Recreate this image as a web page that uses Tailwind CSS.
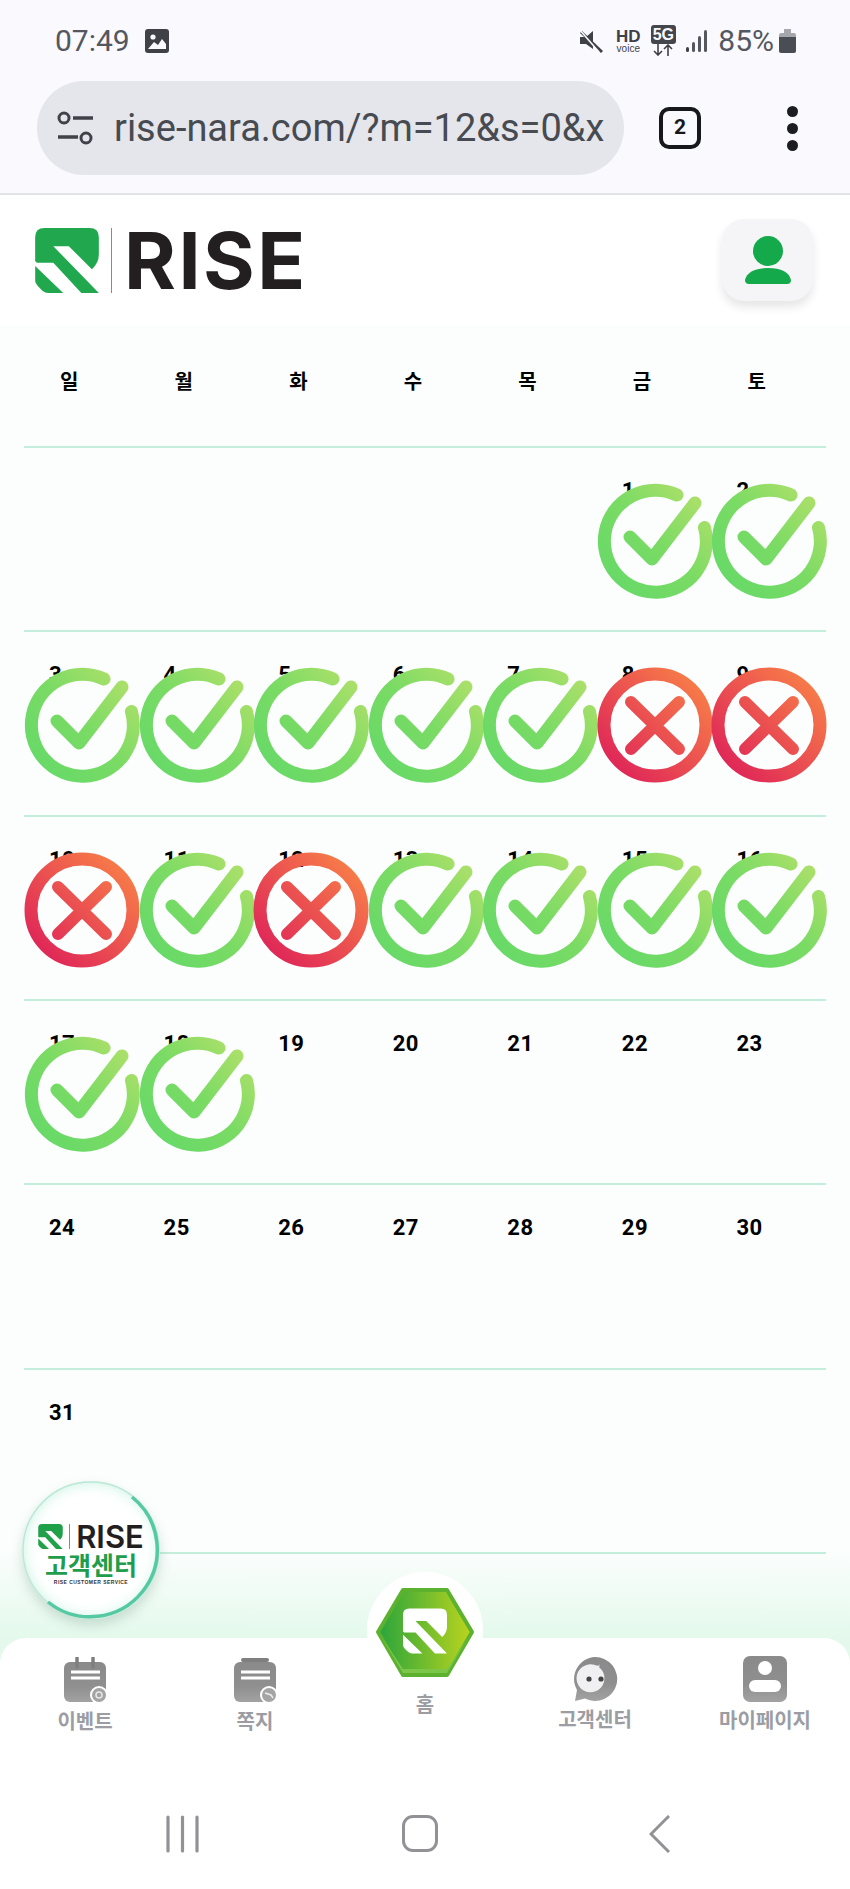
<!DOCTYPE html>
<html lang="ko">
<head>
  <meta charset="UTF-8" />
  <meta name="viewport" content="width=device-width, initial-scale=1.0"/>
  <title>RISE</title>
  <script src="https://cdn.jsdelivr.net/npm/@tailwindcss/browser@4"></script>
</head>
<body class="bg-white">
  <!-- shared icons -->
  <svg class="absolute w-0 h-0" aria-hidden="true">
    <defs>
      <linearGradient id="okGrad" gradientUnits="userSpaceOnUse" x1="10" y1="100" x2="105" y2="10">
        <stop offset="0" stop-color="#66d968"/><stop offset="0.5" stop-color="#7adb64"/><stop offset="1" stop-color="#b0e06a"/>
      </linearGradient>
      <linearGradient id="noGrad" gradientUnits="userSpaceOnUse" x1="15" y1="100" x2="100" y2="15">
        <stop offset="0" stop-color="#df2658"/><stop offset="1" stop-color="#f77c48"/>
      </linearGradient>
      <linearGradient id="hexGrad" x1="0" y1="0" x2="1" y2="0">
        <stop offset="0" stop-color="#28a43c"/><stop offset="1" stop-color="#bcd51e"/>
      </linearGradient>
      <linearGradient id="grayGrad" x1="0" y1="0" x2="0" y2="1">
        <stop offset="0" stop-color="#8a8a8a"/><stop offset="0.6" stop-color="#8f8f8f"/><stop offset="1" stop-color="#a2a2a2"/>
      </linearGradient>
      <symbol id="okIcon" viewBox="-2 -2 118 118">
        <path d="M79 11A51 51 0 1 0 106.500 43.500" fill="none" stroke="url(#okGrad)" stroke-width="13" stroke-linecap="round"/>
        <path d="M32 53L54 75L97 19" fill="none" stroke="url(#okGrad)" stroke-width="13" stroke-linecap="round" stroke-linejoin="round"/>
      </symbol>
      <symbol id="noIcon" viewBox="-2 -2 118 118">
        <circle cx="57" cy="57" r="51" fill="none" stroke="url(#noGrad)" stroke-width="13"/>
        <path d="M33 34L81 81M81 34L33 81" fill="none" stroke="url(#noGrad)" stroke-width="12" stroke-linecap="round"/>
      </symbol>
      <symbol id="riseMark" viewBox="0 0 193 197">
        <path fill="currentColor" d="M0 28Q0 0 28 0H165Q193 0 193 28V80Q193 105 172 125L102 55H55L193 197H140L55 105H5L0 100Z"/>
        <path fill="currentColor" d="M0 115L85 197H40Q30 197 22 190L8 176Q0 168 0 160Z"/>
      </symbol>
    </defs>
  </svg>

  <div class="relative w-[850px] h-[1889px] overflow-hidden flex flex-col font-['Roboto',sans-serif]">

    <!-- Browser chrome -->
    <header class="h-[195px] shrink-0 bg-[#f9f9fe] border-b-2 border-[#e2e3e9]">
      <div class="h-[81px] pl-[55px] pr-[54px] flex items-center justify-between text-[#54575e]">
        <div class="flex items-center gap-[15px]">
          <span class="text-[30px] leading-none">07:49</span>
          <svg class="w-[24px] h-[24px]" viewBox="0 0 24 24">
            <rect width="24" height="24" rx="3" fill="#3f4147"/>
            <circle cx="8" cy="8" r="2.6" fill="#f9f9fe"/>
            <path d="M3 20L9 13L13 16L17 10L21 15V20Z" fill="#f9f9fe"/>
          </svg>
        </div>
        <div class="flex items-center">
          <svg class="w-[24px] h-[26px]" viewBox="0 0 24 26">
            <path d="M1 9H7L14 3V21L7 16H1Z" fill="#3f4147"/>
            <path d="M2 4L23 24" stroke="#3f4147" stroke-width="3"/>
            <path d="M0 1L20 24" stroke="#f9f9fe" stroke-width="1.5"/>
          </svg>
          <div class="ml-[12px] w-[26px] flex flex-col items-center text-[#3f4147] font-['Liberation_Sans',sans-serif] font-bold">
            <span class="text-[17px] leading-[15px]">HD</span>
            <span class="text-[10px] leading-[9px] font-normal">voice</span>
          </div>
          <div class="ml-[9px] w-[26px] flex flex-col items-center">
            <span class="w-[25px] h-[19px] rounded-[3px] bg-[#44464d] text-[#f9f9fe] text-[16px] leading-[19px] text-center font-['Liberation_Sans',sans-serif] font-bold">5G</span>
            <svg class="w-[20px] h-[12px]" viewBox="0 0 20 12">
              <path d="M5 0V11M1 7L5 11L9 7M15 12V1M11 5L15 1L19 5" fill="none" stroke="#3f4147" stroke-width="1.6"/>
            </svg>
          </div>
          <svg class="ml-[10px] w-[22px] h-[24px]" viewBox="0 0 22 24">
            <rect x="0" y="18" width="3" height="5" rx="1.5" fill="#3f4147"/>
            <rect x="6" y="13" width="3" height="10" rx="1.5" fill="#54575e"/>
            <rect x="12" y="7" width="3" height="16" rx="1.5" fill="#54575e"/>
            <rect x="18" y="1" width="3" height="22" rx="1.5" fill="#54575e"/>
          </svg>
          <span class="ml-[10px] text-[30px] leading-none">85%</span>
          <svg class="ml-[5px] w-[17px] h-[24px]" viewBox="0 0 17 24">
            <path d="M5 0H12V4H5Z" fill="#a6a7ac"/>
            <path d="M2 4H15Q17 4 17 6V9H0V6Q0 4 2 4Z" fill="#a6a7ac"/>
            <path d="M0 8H17V22Q17 24 15 24H2Q0 24 0 22Z" fill="#4b4d54"/>
          </svg>
        </div>
      </div>
      <div class="flex items-center pl-[37px]">
        <div class="w-[587px] h-[94px] rounded-full bg-[#e4e6ec] flex items-center pl-[20px] pr-[14px]">
          <svg class="w-[37px] h-[36px] shrink-0" viewBox="0 0 37 36">
            <circle cx="7" cy="8" r="5" fill="none" stroke="#3f4349" stroke-width="3"/>
            <path d="M16 8H36M1 27H21" stroke="#3f4349" stroke-width="3.4"/>
            <circle cx="29" cy="28" r="5" fill="none" stroke="#3f4349" stroke-width="3"/>
          </svg>
          <div class="ml-[20px] flex-1 overflow-hidden whitespace-nowrap text-[38px] leading-[46px] text-[#474b51]">rise-nara.com/?m=12&amp;s=0&amp;x</div>
        </div>
        <div class="ml-[35px] w-[42px] h-[42px] rounded-[10px] border-[4px] border-[#16181c] flex items-center justify-center text-[21px] font-bold text-[#16181c]">2</div>
        <div class="ml-[86px] flex flex-col gap-[6px]">
          <span class="block w-[11px] h-[11px] rounded-full bg-[#1b1d21]"></span>
          <span class="block w-[11px] h-[11px] rounded-full bg-[#1b1d21]"></span>
          <span class="block w-[11px] h-[11px] rounded-full bg-[#1b1d21]"></span>
        </div>
      </div>
    </header>

    <!-- Site header -->
    <div class="h-[130px] shrink-0 bg-white pl-[35px] pr-[37px] flex items-center justify-between">
      <div class="flex items-center">
        <svg class="w-[64px] h-[65px] text-[#21a84f]"><use href="#riseMark"/></svg>
        <span class="ml-[12px] w-[1px] h-[65px] bg-[#8a8a8a]"></span>
        <span class="ml-[12px] text-[79px] leading-none font-bold font-['Inter',sans-serif] tracking-[2.5px] text-[#231f20]">RISE</span>
      </div>
      <div class="w-[91px] h-[82px] rounded-[22px] bg-[#f5f5f7] shadow-[0_6px_10px_rgba(0,0,0,0.10)] flex items-center justify-center">
        <svg class="w-[46px] h-[48px]" viewBox="0 0 46 48">
          <circle cx="23" cy="15" r="15" fill="#14a94a"/>
          <path d="M0 44Q3 32 23 32Q43 32 46 44Q46 48 42 48H4Q0 48 0 44Z" fill="#14a94a"/>
        </svg>
      </div>
    </div>

    <!-- Calendar -->
    <main class="h-[1337px] shrink-0 bg-[linear-gradient(to_bottom,#fbfefd_1225px,#e4f9ec_1313px)] px-[24px]">
      <div id="weekdays" class="h-[121px] grid grid-cols-7 text-[20px] font-bold text-black font-['Noto_Sans_CJK_KR',sans-serif]"></div>
      <div id="weeks"></div>
      <div class="border-t-2 border-[#c3eedc]"></div>
    </main>

    <!-- Customer center bubble -->
    <div class="absolute left-[22px] top-[1481px] w-[138px] h-[138px] rounded-full bg-white shadow-[0_6px_12px_rgba(90,130,110,0.25),inset_0_0_16px_#bdf0dc] flex flex-col items-center pt-[43px]">
      <svg class="absolute inset-0 w-[138px] h-[138px]" viewBox="0 0 138 138">
        <circle cx="69" cy="69" r="68" fill="none" stroke="#bde8d8" stroke-width="1.5"/>
        <path d="M110 16A67 67 0 1 1 26 121" fill="none" stroke="#55c9a2" stroke-width="3.5"/>
      </svg>
      <div class="flex items-center">
        <svg class="w-[25px] h-[25px] text-[#21a04a]"><use href="#riseMark"/></svg>
        <span class="ml-[6px] w-[1px] h-[25px] bg-[#8a8a8a]"></span>
        <span class="ml-[6px] text-[31px] leading-[25px] font-semibold font-['Inter',sans-serif] text-[#231f20]">RISE</span>
      </div>
      <span class="mt-[3px] text-[25px] leading-[25px] font-bold text-[#1f9d4c] font-['Noto_Sans_CJK_KR',sans-serif]">고객센터</span>
      <span class="mt-[2px] text-[5px] leading-[7px] font-bold tracking-[0.45px] text-[#333] font-['Liberation_Sans',sans-serif]">RISE CUSTOMER SERVICE</span>
    </div>

    <!-- Bottom nav -->
    <nav class="relative -mt-[24px] flex-1 bg-white rounded-t-[26px] flex flex-col font-['Noto_Sans_CJK_KR',sans-serif] font-bold text-[20px] leading-[26px] text-[#9b9da3]">
      <div class="h-[177px] grid grid-cols-5">
        <a class="flex flex-col items-center pt-[19px]">
          <svg class="w-[46px] h-[46px]" viewBox="0 0 46 46">
            <rect x="2" y="5" width="42" height="40" rx="6" fill="url(#grayGrad)"/>
            <path d="M15 1V10M31 1V10" stroke="#7f7f7f" stroke-width="3.5" stroke-linecap="round"/>
            <path d="M9 15H38M9 21H38" stroke="#fff" stroke-width="3"/>
            <circle cx="37" cy="38" r="8" fill="#a4a4a4" stroke="#fff" stroke-width="2"/>
            <circle cx="37" cy="38" r="3" fill="none" stroke="#e8e8e8" stroke-width="1.5"/>
          </svg>
          <span class="mt-[5px]">이벤트</span>
        </a>
        <a class="flex flex-col items-center pt-[19px]">
          <svg class="w-[46px] h-[46px]" viewBox="0 0 46 46">
            <rect x="2" y="5" width="42" height="40" rx="6" fill="url(#grayGrad)"/>
            <path d="M11 3H35" stroke="#7f7f7f" stroke-width="4" stroke-linecap="round"/>
            <path d="M9 15H38M9 21H38" stroke="#fff" stroke-width="3"/>
            <circle cx="37" cy="38" r="8" fill="#a4a4a4" stroke="#fff" stroke-width="2"/>
            <path d="M33 36L39 38L41 41" fill="none" stroke="#eee" stroke-width="1.5"/>
          </svg>
          <span class="mt-[5px]">쪽지</span>
        </a>
        <a class="relative flex flex-col items-center">
          <span class="absolute left-[27px] -top-[66px] w-[116px] h-[116px] rounded-full bg-white"></span>
          <svg class="relative -mt-[52px] w-[100px] h-[93px]" viewBox="0 0 100 93">
            <path d="M28 4H72L97 46L72 89H28L3 46Z" fill="url(#hexGrad)" stroke="#5cb22f" stroke-width="4" stroke-linejoin="round"/>
            <path d="M6 50L28 87H72L94 50L72 83H28Z" fill="#7cc74a"/>
          </svg>
          <svg class="absolute left-[63px] -top-[31px] w-[44px] h-[48px] text-white"><use href="#riseMark"/></svg>
          <span class="relative mt-[12px]">홈</span>
        </a>
        <a class="flex flex-col items-center pt-[18px]">
          <svg class="w-[46px] h-[46px]" viewBox="0 0 46 46">
            <path d="M23 1A22 22 0 1 1 13 42.500L3 45L5 34A22 22 0 0 1 23 1Z" fill="url(#grayGrad)"/>
            <path d="M23 9Q27 11 28 8Q26 12 29 13A14 14 0 1 1 23 9Z" fill="#f0f0f2"/>
            <circle cx="17" cy="23" r="2.600" fill="#444"/>
            <circle cx="29" cy="23" r="2.600" fill="#444"/>
          </svg>
          <span class="mt-[4px]">고객센터</span>
        </a>
        <a class="flex flex-col items-center pt-[18px]">
          <svg class="w-[46px] h-[46px]" viewBox="0 0 46 46">
            <rect x="1" y="0" width="44" height="46" rx="7" fill="url(#grayGrad)"/>
            <circle cx="23" cy="12" r="7" fill="#fff"/>
            <rect x="7" y="24" width="32" height="12" rx="6" fill="#fff"/>
          </svg>
          <span class="mt-[5px]">마이페이지</span>
        </a>
      </div>
      <!-- Android nav -->
      <div class="flex items-start pl-[166px]">
        <svg class="w-[33px] h-[38px]" viewBox="0 0 33 38">
          <path d="M2 2V36M16.500 2V36M31 2V36" stroke="#929296" stroke-width="3.200" stroke-linecap="round"/>
        </svg>
        <span class="ml-[203px] w-[36px] h-[37px] rounded-[11px] border-[3px] border-[#929296]"></span>
        <svg class="ml-[211px] w-[21px] h-[38px]" viewBox="0 0 21 38">
          <path d="M20 1L2 19L20 37" fill="none" stroke="#929296" stroke-width="3"/>
        </svg>
      </div>
    </nav>
  </div>

  <script>
    // Weekday header
    const days = ['일', '월', '화', '수', '목', '금', '토'];
    document.getElementById('weekdays').innerHTML = days.map(d =>
      `<div class="pl-[36px] pt-[41px]">${d}</div>`).join('');

    // Attendance: o = checked, x = missed
    const marks = { 1:'o',2:'o',3:'o',4:'o',5:'o',6:'o',7:'o',8:'x',9:'x',10:'x',11:'o',12:'x',13:'o',14:'o',15:'o',16:'o',17:'o',18:'o' };
    const firstBlank = 5;
    const cells = [];
    for (let i = 0; i < firstBlank; i++) cells.push(null);
    for (let d = 1; d <= 31; d++) cells.push(d);

    let html = '';
    for (let w = 0; w < 6; w++) {
      html += '<div class="h-[184.33px] border-t-2 border-[#c3eedc] grid grid-cols-7">';
      for (let c = 0; c < 7; c++) {
        const d = cells[w * 7 + c];
        html += '<div class="relative pl-[25px] pt-[31px] text-[22px] leading-[24px] font-bold tracking-[0.5px] text-black">';
        if (d) html += d;
        if (marks[d] === 'o') html += '<svg class="absolute -left-[1px] top-[34px] w-[118px] h-[118px]"><use href="#okIcon"/></svg>';
        if (marks[d] === 'x') html += '<svg class="absolute -left-[1px] top-[34px] w-[118px] h-[118px]"><use href="#noIcon"/></svg>';
        html += '</div>';
      }
      html += '</div>';
    }
    document.getElementById('weeks').innerHTML = html;
  </script>
</body>
</html>
